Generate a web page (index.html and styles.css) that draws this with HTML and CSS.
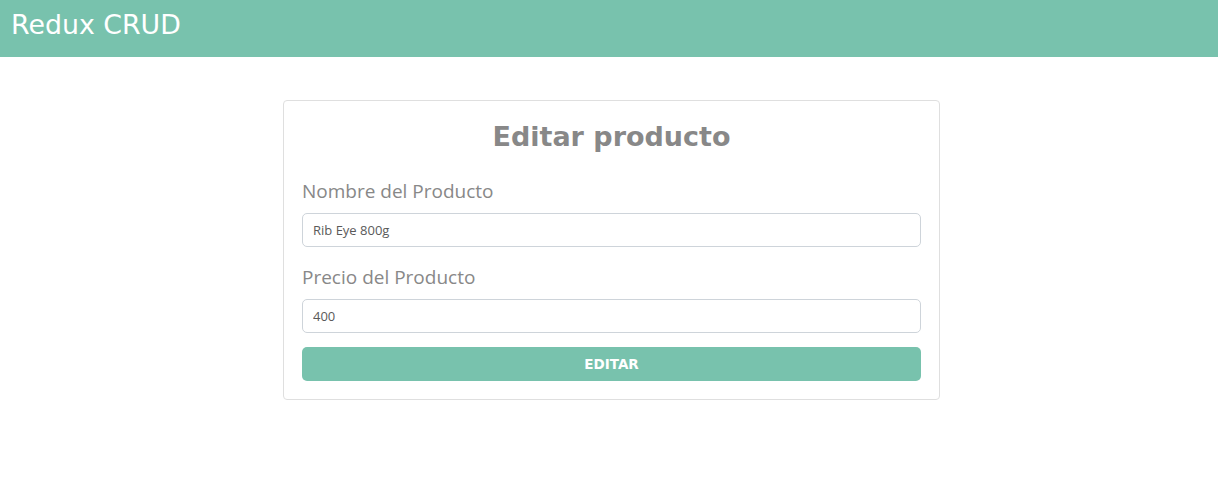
FILE: index.html
```html
<!DOCTYPE html>
<html lang="es">
<head>
<meta charset="utf-8">
<title>Redux CRUD</title>
<link rel="stylesheet" href="styles.css">
</head>
<body>
<header class="navbar">
  <h1 class="brand">Redux CRUD</h1>
</header>
<main class="page">
  <div class="card">
    <h2 class="card-title">Editar producto</h2>
    <form class="form">
      <div class="field">
        <label class="label">Nombre del Producto</label>
        <input class="input" type="text" value="Rib Eye 800g">
      </div>
      <div class="field field-last">
        <label class="label">Precio del Producto</label>
        <input class="input" type="text" value="400">
      </div>
      <button class="btn" type="button">Editar</button>
    </form>
  </div>
</main>
</body>
</html>
```
FILE: styles.css
```css
* { box-sizing: border-box; }
body {
  margin: 0;
  background: #fff;
  font-family: "Open Sans", "Noto Sans", sans-serif;
  color: #888;
}
.navbar {
  height: 57px;
  background: #78c2ad;
  display: flex;
  align-items: center;
  padding: 0 11px;
}
.brand {
  margin: 0;
  font-family: "DejaVu Sans", sans-serif;
  font-weight: 400;
  font-size: 26.8px;
  color: #fff;
  line-height: 1;
  padding-bottom: 6px;
}
.page {
  display: flex;
  justify-content: center;
  padding: 43px 0 0 5px;
}
.card {
  width: 657px;
  border: 1px solid #dfdfdf;
  border-radius: 4px;
  padding: 18px;
}
.card-title {
  margin: 0 0 24px;
  text-align: center;
  font-family: "DejaVu Sans", sans-serif;
  font-weight: 700;
  font-size: 27px;
  color: #888;
  line-height: 36px;
}
.form { display: flex; flex-direction: column; }
.field { display: flex; flex-direction: column; margin-bottom: 18px; }
.field-last { margin-bottom: 14px; }
.label {
  font-size: 19px;
  line-height: 24px;
  margin-bottom: 10px;
  color: #888;
}
.input {
  height: 34px;
  border: 1px solid #ced4da;
  border-radius: 5px;
  padding: 0 10px;
  font-family: "Open Sans", sans-serif;
  font-size: 13px;
  color: #5a5a5a;
  outline: none;
}
.btn {
  height: 34px;
  border: none;
  border-radius: 5px;
  background: #78c2ad;
  color: #fff;
  font-family: "DejaVu Sans", sans-serif;
  font-weight: 700;
  font-size: 13.5px;
  text-transform: uppercase;
}
```
